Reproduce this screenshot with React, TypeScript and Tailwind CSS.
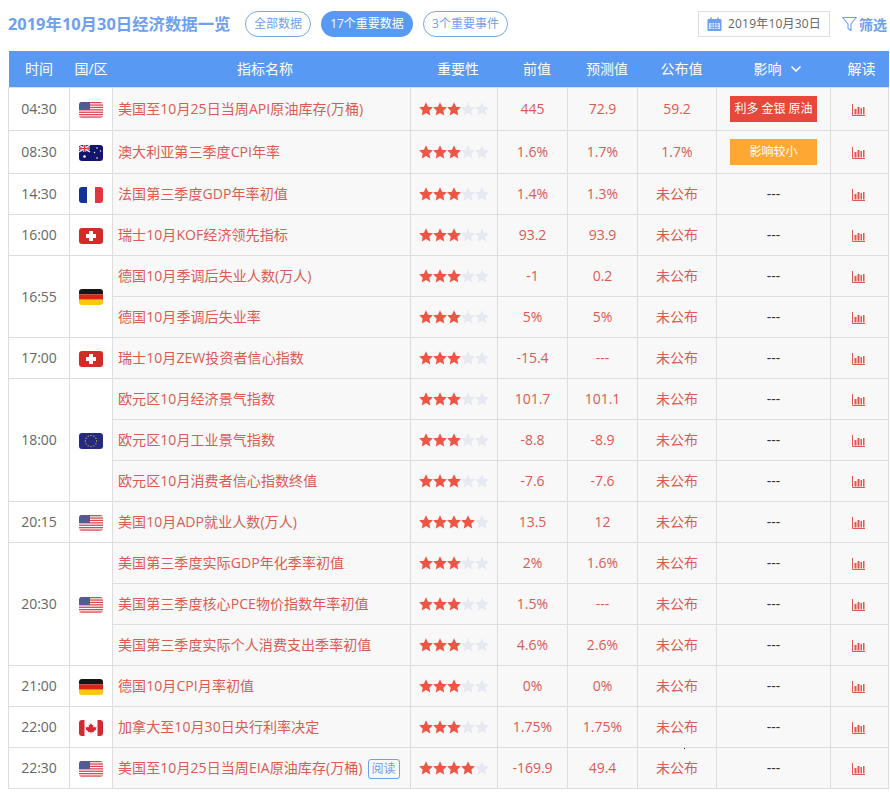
import { Fragment } from 'react';
import { ChevronDown } from 'lucide-react';

type FlagKind = 'us' | 'au' | 'fr' | 'ch' | 'de' | 'eu' | 'ca';

interface Indicator {
  name: string;
  stars: number;
  prev: string;
  forecast: string;
  actual: string;
  impact?: 'bull' | 'small';
  read?: boolean;
}

interface Group {
  time: string;
  flag: FlagKind;
  tall?: boolean;
  items: Indicator[];
}

const groups: Group[] = [
  {
    time: '04:30',
    flag: 'us',
    tall: true,
    items: [{ name: '美国至10月25日当周API原油库存(万桶)', stars: 3, prev: '445', forecast: '72.9', actual: '59.2', impact: 'bull' }],
  },
  {
    time: '08:30',
    flag: 'au',
    tall: true,
    items: [{ name: '澳大利亚第三季度CPI年率', stars: 3, prev: '1.6%', forecast: '1.7%', actual: '1.7%', impact: 'small' }],
  },
  { time: '14:30', flag: 'fr', items: [{ name: '法国第三季度GDP年率初值', stars: 3, prev: '1.4%', forecast: '1.3%', actual: '未公布' }] },
  { time: '16:00', flag: 'ch', items: [{ name: '瑞士10月KOF经济领先指标', stars: 3, prev: '93.2', forecast: '93.9', actual: '未公布' }] },
  {
    time: '16:55',
    flag: 'de',
    items: [
      { name: '德国10月季调后失业人数(万人)', stars: 3, prev: '-1', forecast: '0.2', actual: '未公布' },
      { name: '德国10月季调后失业率', stars: 3, prev: '5%', forecast: '5%', actual: '未公布' },
    ],
  },
  { time: '17:00', flag: 'ch', items: [{ name: '瑞士10月ZEW投资者信心指数', stars: 3, prev: '-15.4', forecast: '---', actual: '未公布' }] },
  {
    time: '18:00',
    flag: 'eu',
    items: [
      { name: '欧元区10月经济景气指数', stars: 3, prev: '101.7', forecast: '101.1', actual: '未公布' },
      { name: '欧元区10月工业景气指数', stars: 3, prev: '-8.8', forecast: '-8.9', actual: '未公布' },
      { name: '欧元区10月消费者信心指数终值', stars: 3, prev: '-7.6', forecast: '-7.6', actual: '未公布' },
    ],
  },
  { time: '20:15', flag: 'us', items: [{ name: '美国10月ADP就业人数(万人)', stars: 4, prev: '13.5', forecast: '12', actual: '未公布' }] },
  {
    time: '20:30',
    flag: 'us',
    items: [
      { name: '美国第三季度实际GDP年化季率初值', stars: 3, prev: '2%', forecast: '1.6%', actual: '未公布' },
      { name: '美国第三季度核心PCE物价指数年率初值', stars: 3, prev: '1.5%', forecast: '---', actual: '未公布' },
      { name: '美国第三季度实际个人消费支出季率初值', stars: 3, prev: '4.6%', forecast: '2.6%', actual: '未公布' },
    ],
  },
  { time: '21:00', flag: 'de', items: [{ name: '德国10月CPI月率初值', stars: 3, prev: '0%', forecast: '0%', actual: '未公布' }] },
  { time: '22:00', flag: 'ca', items: [{ name: '加拿大至10月30日央行利率决定', stars: 3, prev: '1.75%', forecast: '1.75%', actual: '未公布' }] },
  { time: '22:30', flag: 'us', items: [{ name: '美国至10月25日当周EIA原油库存(万桶)', stars: 4, prev: '-169.9', forecast: '49.4', actual: '未公布', read: true }] },
];

const headers = [
  { label: '时间', cls: '' },
  { label: '国/区', cls: '' },
  { label: '指标名称', cls: 'pl-[7px]' },
  { label: '重要性', cls: 'pl-[8px]' },
  { label: '前值', cls: 'pl-[9px]' },
  { label: '预测值', cls: 'pl-[9px]' },
  { label: '公布值', cls: 'pl-[9px]' },
  { label: '影响', cls: 'pl-[6px]' },
  { label: '解读', cls: 'pl-[4px]' },
];

function Flag({ kind }: { kind: FlagKind }) {
  return (
    <svg width="24" height="16" viewBox="0 0 24 16" className="block mx-auto rounded-[3px] mt-[2px]">
      {kind === 'us' && (
        <>
          <rect width="24" height="16" fill="#fff" />
          {[0, 2.4, 4.8, 7.2, 9.6, 12, 14.4].map((y) => (
            <rect key={y} y={y} width="24" height="1.3" fill="#d9474f" />
          ))}
          <rect width="11" height="8" fill="#545a94" />
        </>
      )}
      {kind === 'au' && (
        <>
          <rect width="24" height="16" fill="#12146e" />
          <rect width="11" height="7" fill="#2f3088" />
          <path d="M0 0L11 7M11 0L0 7" stroke="#f0f0f5" strokeWidth="1.4" />
          <path d="M5.5 0V7M0 3.5H11" stroke="#f0f0f5" strokeWidth="2.2" />
          <path d="M5.5 0V7M0 3.5H11" stroke="#d8343f" strokeWidth="1.1" />
          <circle cx="5.5" cy="11.5" r="1.3" fill="#fff" />
          <circle cx="18" cy="3" r="0.8" fill="#fff" />
          <circle cx="21.5" cy="6" r="0.7" fill="#fff" />
          <circle cx="15.5" cy="7.5" r="0.7" fill="#fff" />
          <circle cx="18" cy="13" r="0.8" fill="#fff" />
        </>
      )}
      {kind === 'fr' && (
        <>
          <rect width="8" height="16" fill="#13329a" />
          <rect x="8" width="8" height="16" fill="#fff" />
          <rect x="16" width="8" height="16" fill="#e5343f" />
        </>
      )}
      {kind === 'ch' && (
        <>
          <rect width="24" height="16" fill="#d52b26" />
          <rect x="10" y="3" width="4" height="10" fill="#fff" />
          <rect x="7" y="6" width="10" height="4" fill="#fff" />
        </>
      )}
      {kind === 'de' && (
        <>
          <rect width="24" height="5.4" fill="#161616" />
          <rect y="5.4" width="24" height="5.3" fill="#dc2318" />
          <rect y="10.7" width="24" height="5.3" fill="#fbc70f" />
        </>
      )}
      {kind === 'eu' && (
        <>
          <rect width="24" height="16" fill="#252a80" />
          {Array.from({ length: 12 }).map((_, i) => (
            <circle
              key={i}
              cx={12 + 5.6 * Math.cos((i * Math.PI) / 6)}
              cy={8 + 5.6 * Math.sin((i * Math.PI) / 6)}
              r="0.65"
              fill="#d9c23a"
            />
          ))}
        </>
      )}
      {kind === 'ca' && (
        <>
          <rect width="24" height="16" fill="#fff" />
          <rect width="5.5" height="16" fill="#d8282f" />
          <rect x="18.5" width="5.5" height="16" fill="#d8282f" />
          <path
            d="M12 3l1.2 2.2 1.2-.6-.5 3 1.5-1.2.4 1 1.7-.3-.6 1.7.6.4-2.6 2-.3 1-2.2-.3V13.5h-.8V11.900l-2.200.3-.3-1-2.600-2 .6-.4-.6-1.700 1.700.3.4-1 1.500 1.200-.5-3 1.200.6z"
            fill="#d8282f"
          />
        </>
      )}
    </svg>
  );
}

function Stars({ count }: { count: number }) {
  return (
    <div className="flex pl-[8px] mt-[1px]">
      {[0, 1, 2, 3, 4].map((i) => (
        <svg key={i} width="14" height="14" viewBox="1 1 22 22" className="block">
          <path
            d="M12 1.500l3.200 7 7.600.9-5.600 5.200 1.500 7.500L12 18.300l-6.700 3.800 1.500-7.500L1.200 9.400l7.600-.9z"
            fill={i < count ? '#ee5544' : '#e6e8f2'}
          />
        </svg>
      ))}
    </div>
  );
}

function BarIcon() {
  return (
    <svg width="13" height="12" viewBox="0 0 13 12" className="block ml-[21px] mt-[2px]">
      <path d="M0.500 0V11.500H13" fill="none" stroke="#e2574c" strokeWidth="1" />
      <rect x="2.500" y="5" width="2" height="5.500" fill="#e2574c" />
      <rect x="5.500" y="3" width="2" height="7.500" fill="#e2574c" />
      <rect x="8.500" y="4" width="1.500" height="6.500" fill="#e2574c" />
      <rect x="11" y="3" width="1.500" height="7.500" fill="#e2574c" />
    </svg>
  );
}

function Impact({ type }: { type?: 'bull' | 'small' }) {
  if (type === 'bull') {
    return <div className="mx-auto w-[87px] h-[26px] leading-[26px] bg-[#e8483c] text-white text-[12px]">利多 金银 原油</div>;
  }
  if (type === 'small') {
    return <div className="mx-auto w-[87px] h-[26px] leading-[26px] bg-[#ffa733] text-white text-[12px]">影响较小</div>;
  }
  return <span className="text-[#333]">---</span>;
}

export default function App() {
  return (
    <div className="w-[890px] h-[794px] bg-white overflow-hidden pl-2 font-['Open_Sans','Noto_Sans_CJK_SC',sans-serif] relative">
      <div className="flex items-center h-[51px] pb-[3px]">
        <h1 className="text-[16.400px] font-bold text-[#6f9ff0] w-[237px] whitespace-nowrap">2019年10月30日经济数据一览</h1>
        <div className="flex gap-[10px]">
          <button className="w-[66px] h-[26px] rounded-full border border-[#7ba6e0] text-[#6f9ff0] text-[12px]">全部数据</button>
          <button className="w-[92px] h-[26px] rounded-full bg-[#5899f3] text-white text-[12px]">17个重要数据</button>
          <button className="w-[85px] h-[26px] rounded-full border border-[#7ba6e0] text-[#6f9ff0] text-[12px]">3个重要事件</button>
        </div>
        <div className="ml-[190px] flex items-center justify-center gap-[6px] w-[132px] h-[26px] border border-[#ddd] text-[12px] tracking-[0.2px] text-[#666]">
          <svg width="15" height="14" viewBox="0 0 15 14">
            <rect x="0.500" y="2" width="14" height="12" rx="1" fill="#6f9ff0" />
            <rect x="2" y="6" width="11" height="6" fill="#dbe7fb" />
            <path d="M4 0.500V3.500M11 0.500V3.500" stroke="#6f9ff0" strokeWidth="1.500" />
            <path d="M3 8H12M3 10.500H12M5 6V12M7.500 6V12M10 6V12" stroke="#6f9ff0" strokeWidth="0.800" />
          </svg>
          <span>2019年10月30日</span>
        </div>
        <div className="ml-[12px] flex items-center gap-[2px] text-[14px] text-[#6f9ff0] whitespace-nowrap">
          <svg width="15" height="16" viewBox="0 0 15 16" fill="none" stroke="#6f9ff0" strokeWidth="1.100">
            <path d="M0.800 1.500H14.200L9 8V14.500L6 12.500V8z" strokeLinejoin="round" />
          </svg>
          <span className="font-bold">筛选</span>
        </div>
      </div>

      <table className="table-fixed border-collapse w-[880px] text-[14px] text-center">
        <colgroup>
          <col className="w-[61px]" />
          <col className="w-[43px]" />
          <col className="w-[298px]" />
          <col className="w-[87px]" />
          <col className="w-[70px]" />
          <col className="w-[70px]" />
          <col className="w-[79px]" />
          <col className="w-[114px]" />
          <col className="w-[58px]" />
        </colgroup>
        <thead>
          <tr className="h-[36px] bg-[#5899f3] text-white">
            {headers.map((h) => (
              <th key={h.label} className={`font-normal p-0 ${h.cls}`}>
                {h.label === '影响' ? (
                  <span className="inline-flex items-center gap-[6px] pl-[4px]">
                    {h.label}
                    <ChevronDown size={16} strokeWidth={2.500} />
                  </span>
                ) : (
                  h.label
                )}
              </th>
            ))}
          </tr>
        </thead>
        <tbody>
          {groups.map((g) => (
            <Fragment key={g.time}>
              {g.items.map((item, idx) => (
                <tr key={item.name} className={g.tall ? 'h-[43px]' : 'h-[41px]'}>
                  {idx === 0 && (
                    <>
                      <td rowSpan={g.items.length} className="border border-[#ddd] bg-white text-[#666] p-0">
                        {g.time}
                      </td>
                      <td rowSpan={g.items.length} className="border border-[#ddd] bg-white p-0">
                        <Flag kind={g.flag} />
                      </td>
                    </>
                  )}
                  <td className="border border-[#ddd] bg-[#f8f8f9] text-left pl-[5px] pr-0 py-0 text-[#dc5a52] tracking-[0.08px] whitespace-nowrap">
                    {item.name}
                    {item.read && (
                      <span className="inline-block ml-[5px] w-[32px] h-[20px] leading-[18px] text-center border border-[#6f9ff0] rounded-[3px] text-[#6f9ff0] text-[12px]">
                        阅读
                      </span>
                    )}
                  </td>
                  <td className="border border-[#ddd] bg-[#f8f8f9] p-0">
                    <Stars count={item.stars} />
                  </td>
                  <td className="border border-[#ddd] bg-[#f8f8f9] text-[#dc5a52] p-0">{item.prev}</td>
                  <td className="border border-[#ddd] bg-[#f8f8f9] text-[#dc5a52] p-0">{item.forecast}</td>
                  <td className="border border-[#ddd] bg-[#f8f8f9] text-[#dc5a52] p-0">{item.actual}</td>
                  <td className="border border-[#ddd] bg-[#f8f8f9] p-0">
                    <Impact type={item.impact} />
                  </td>
                  <td className="border border-[#ddd] bg-[#f8f8f9] p-0">
                    <BarIcon />
                  </td>
                </tr>
              ))}
            </Fragment>
          ))}
        </tbody>
      </table>
      <div className="absolute left-[684px] top-[748px] w-[1px] h-[1px] bg-[#222]" />
    </div>
  );
}
